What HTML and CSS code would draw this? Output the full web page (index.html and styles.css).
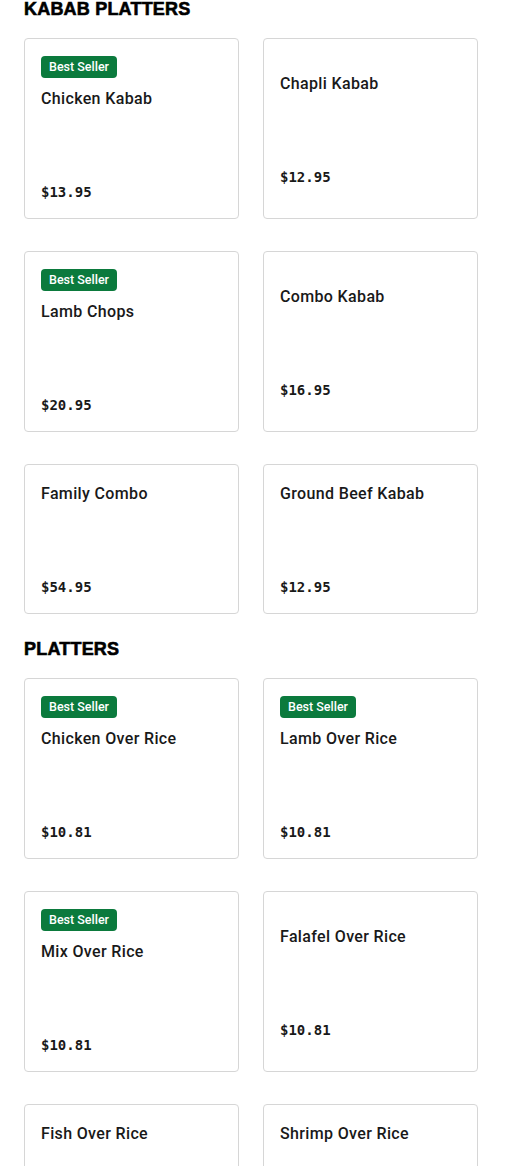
FILE: index.html
```html
<!DOCTYPE html>
<html lang="en">
<head>
    <meta charset="UTF-8">
    <meta name="viewport" content="width=device-width, initial-scale=1.0">
    <title>Menu</title>
    <link rel="stylesheet" href="styles.css">
</head>
<body>
    <section class="menu-section">
        <h2 class="section-title">KABAB PLATTERS</h2>
        <div class="item-grid">
            <div class="item-card">
                <div class="item-info">
                    <span class="badge">Best Seller</span>
                    <div class="item-name">Chicken Kabab</div>
                    <div class="item-desc"></div>
                    <div class="item-price">$13.95</div>
                </div>
            </div>
            <div class="item-card">
                <div class="item-info">
                    <div class="item-name">Chapli Kabab</div>
                    <div class="item-desc"></div>
                    <div class="item-price">$12.95</div>
                </div>
            </div>
            <div class="item-card">
                <div class="item-info">
                    <span class="badge">Best Seller</span>
                    <div class="item-name">Lamb Chops</div>
                    <div class="item-desc"></div>
                    <div class="item-price">$20.95</div>
                </div>
            </div>
            <div class="item-card">
                <div class="item-info">
                    <div class="item-name">Combo Kabab</div>
                    <div class="item-desc"></div>
                    <div class="item-price">$16.95</div>
                </div>
            </div>
            <div class="item-card">
                <div class="item-info">
                    <div class="item-name">Family Combo</div>
                    <div class="item-desc"></div>
                    <div class="item-price">$54.95</div>
                </div>
            </div>
            <div class="item-card">
                <div class="item-info">
                    <div class="item-name">Ground Beef Kabab</div>
                    <div class="item-desc"></div>
                    <div class="item-price">$12.95</div>
                </div>
            </div>
        </div>
    </section>
    <section class="menu-section">
        <h2 class="section-title">PLATTERS</h2>
        <div class="item-grid">
            <div class="item-card">
                <div class="item-info">
                    <span class="badge">Best Seller</span>
                    <div class="item-name">Chicken Over Rice</div>
                    <div class="item-desc"></div>
                    <div class="item-price">$10.81</div>
                </div>
            </div>
            <div class="item-card">
                <div class="item-info">
                    <span class="badge">Best Seller</span>
                    <div class="item-name">Lamb Over Rice</div>
                    <div class="item-desc"></div>
                    <div class="item-price">$10.81</div>
                </div>
            </div>
            <div class="item-card">
                <div class="item-info">
                    <span class="badge">Best Seller</span>
                    <div class="item-name">Mix Over Rice</div>
                    <div class="item-desc"></div>
                    <div class="item-price">$10.81</div>
                </div>
            </div>
            <div class="item-card">
                <div class="item-info">
                    <div class="item-name">Falafel Over Rice</div>
                    <div class="item-desc"></div>
                    <div class="item-price">$10.81</div>
                </div>
            </div>
            <div class="item-card">
                <div class="item-info">
                    <div class="item-name">Fish Over Rice</div>
                    <div class="item-desc"></div>
                    <div class="item-price">$10.81</div>
                </div>
            </div>
            <div class="item-card">
                <div class="item-info">
                    <div class="item-name">Shrimp Over Rice</div>
                    <div class="item-desc"></div>
                    <div class="item-price">$10.81</div>
                </div>
            </div>
        </div>
    </section>
</body>
</html>
```

FILE: styles.css
```css
body {
    margin: 0;
    padding: 0 27px 0 24px;
    font-family: Roboto, "Liberation Sans", sans-serif;
    background-color: #ffffff;
    color: #191919;
}
.menu-section {
    margin-bottom: 26px;
}
.section-title {
    margin: -1px 0 19px 0;
    height: 20px;
    line-height: 20px;
    font-family: "Liberation Sans", Arial, sans-serif;
    font-size: 18px;
    font-weight: 700;
    -webkit-text-stroke: 0.6px #000;
    color: #000000;
    letter-spacing: 0.2px;
}
.item-grid {
    display: grid;
    grid-template-columns: 1fr 1fr;
    column-gap: 24px;
    row-gap: 32px;
}
.item-card {
    display: flex;
    align-items: center;
    border: 1px solid #d6d6d6;
    border-radius: 4px;
    padding: 17px 16px 16px 16px;
}
.item-info {
    display: flex;
    flex-direction: column;
    align-items: flex-start;
    width: 100%;
}
.badge {
    display: inline-block;
    height: 22px;
    line-height: 22px;
    padding: 0 8px;
    margin-bottom: 9px;
    background-color: #0b7a3d; /* Green badge */
    color: #ffffff;
    font-size: 12.5px;
    font-weight: 500;
    border-radius: 4px;
}
.item-name {
    font-size: 16px;
    line-height: 24px;
    font-weight: 500;
    letter-spacing: 0.35px;
    color: #191919;
}
.item-desc {
    height: 71px;
}
.item-price {
    font-family: "DejaVu Sans Mono", "Liberation Mono", monospace;
    font-size: 14px;
    line-height: 20px;
    font-weight: 700;
    color: #191919;
}
```
